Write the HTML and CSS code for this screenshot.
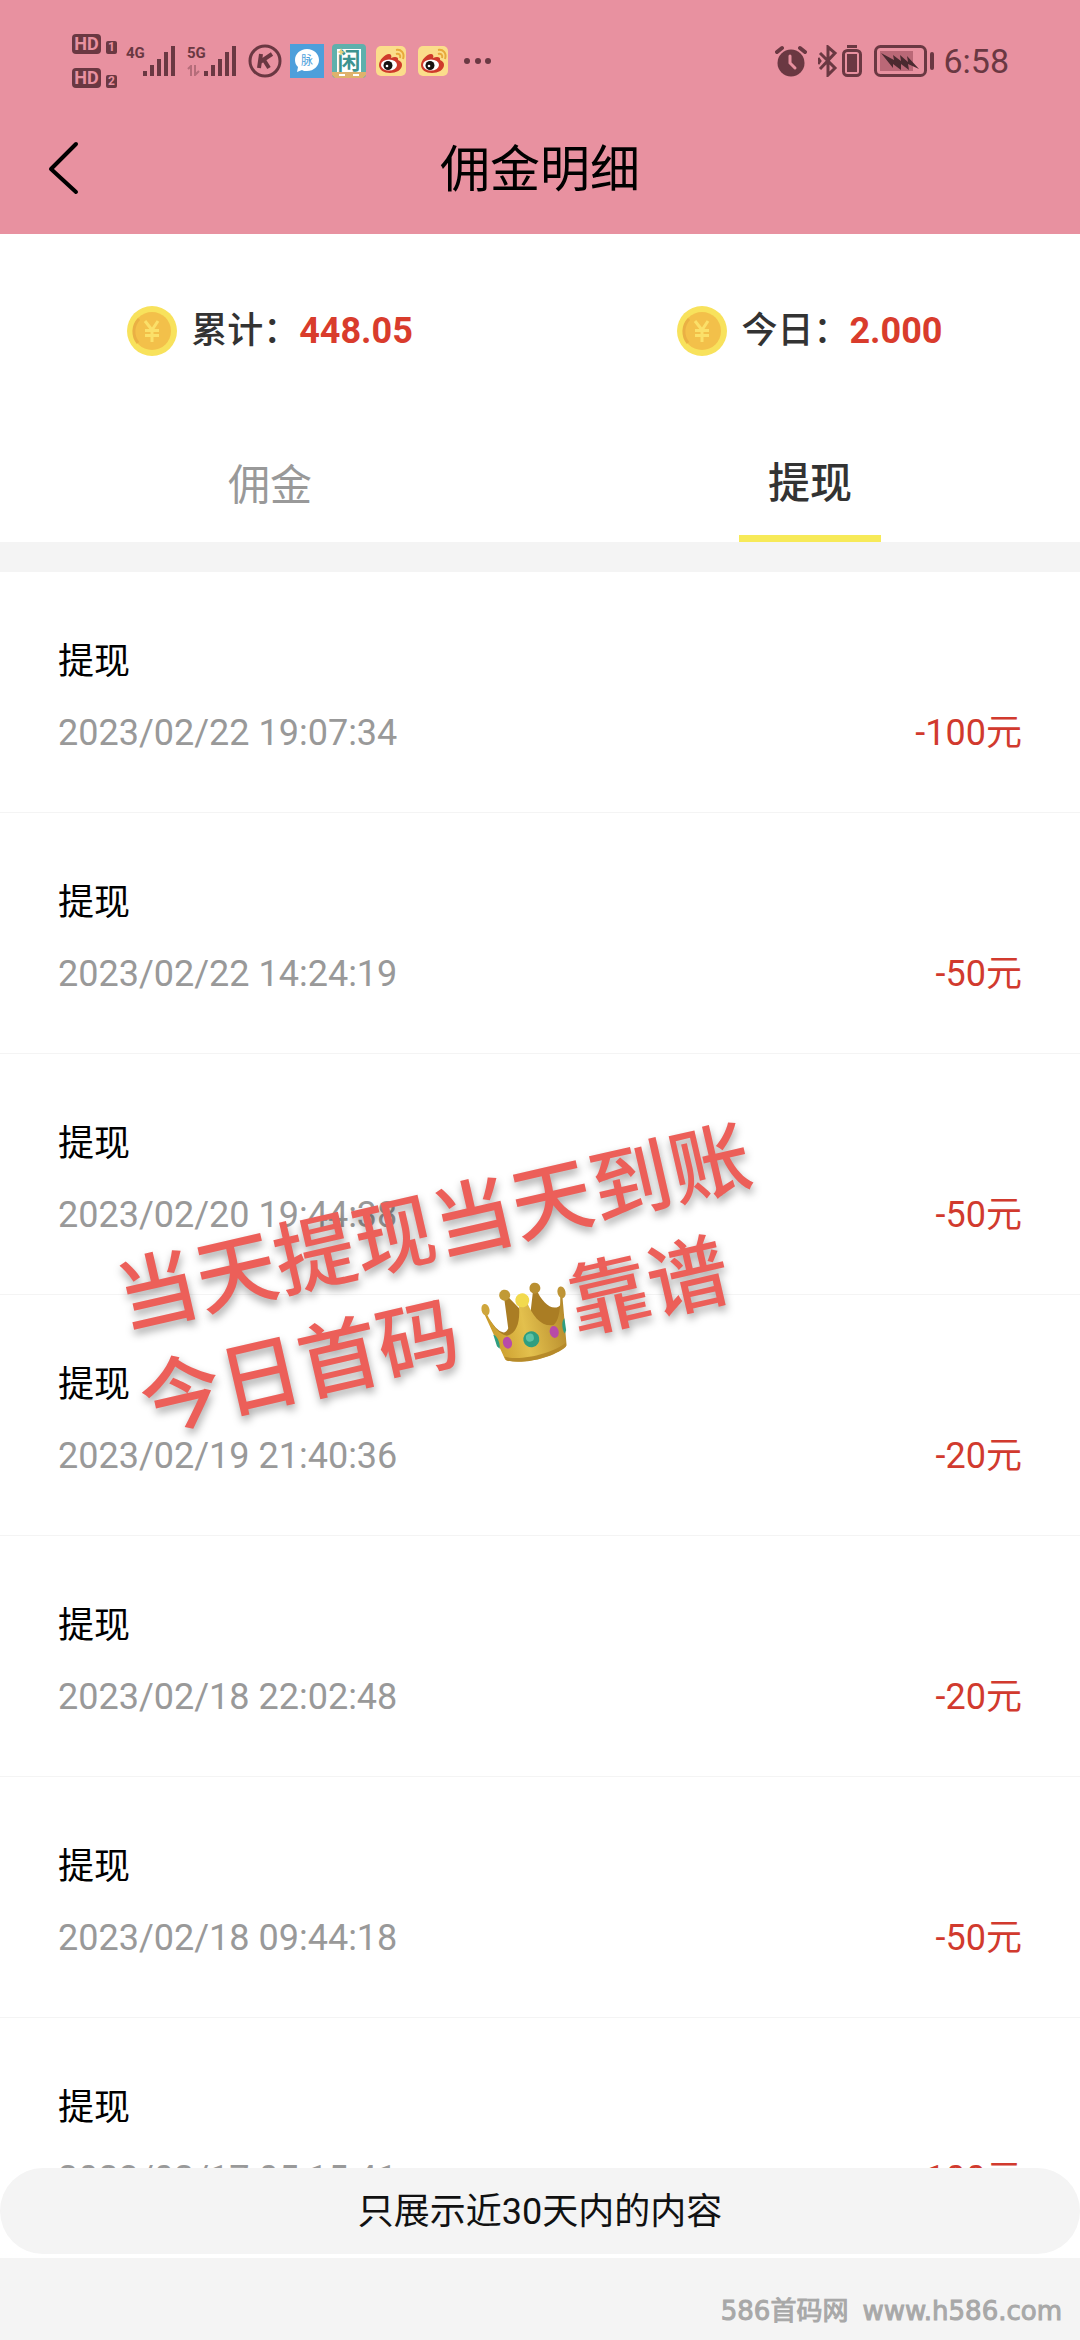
FILE: index.html
```html
<!DOCTYPE html>
<html lang="zh-CN">
<head>
<meta charset="utf-8">
<meta name="viewport" content="width=device-width, initial-scale=1">
<title>佣金明细</title>
<link rel="stylesheet" href="styles.css">
</head>
<body>
<svg class="defs" width="0" height="0" aria-hidden="true">
  <defs>
    <symbol id="bars" viewBox="0 0 34 32">
      <path d="M0 26h4v5H0zM7 20h4v11H7zM14 14h4v17h-4zM21 7h4v24h-4zM28 1h4v30h-4z"/>
    </symbol>
    <symbol id="weibo" viewBox="0 0 30 30">
      <rect width="30" height="30" rx="5" fill="#fbdd8b"/>
      <path d="M3 19c0-5 6-11 10-11 2 0 3 2 2 4 4-2 8-1 7 2 3 1 4 3 4 5 0 5-6 8-12 8S3 24 3 19z" fill="#cf3a2b"/>
      <ellipse cx="13" cy="19" rx="8" ry="5.500" fill="#fff"/>
      <circle cx="12" cy="19.500" r="4.500" fill="#17120f"/>
      <circle cx="11" cy="20" r="1.300" fill="#fff"/>
      <path d="M20 8c3-1 5 1 4 4M20 4c5-1 9 3 7 9" fill="none" stroke="#e8a93c" stroke-width="2"/>
    </symbol>
    <symbol id="coin" viewBox="0 0 50 50">
      <circle cx="25" cy="25" r="25" fill="#f8e25c"/>
      <circle cx="25" cy="25" r="19" fill="#f3c04a"/>
      <path d="M12 13a18 18 0 0 0-1 24" fill="none" stroke="#eab044" stroke-width="3"/>
      <path d="M18 15l7 9 6-9M25 24v12M18 24.500h14M18 29.500h14" fill="none" stroke="#fbe069" stroke-width="3"/>
    </symbol>
  </defs>
</svg>
<div class="app">
  <header class="top">
    <div class="status">
      <div class="status-left">
        <div class="hd">
          <div class="hd-line"><span class="hd-tag">HD</span><span class="sim">1</span></div>
          <div class="hd-line"><span class="hd-tag">HD</span><span class="sim">2</span></div>
        </div>
        <div class="signal"><span class="net">4G</span><svg class="bars"><use href="#bars"/></svg></div>
        <div class="signal"><span class="net">5G<svg class="updown" viewBox="0 0 14 11"><path d="M1 4l3-3v10M8 0v10l4-4" fill="none" stroke="currentColor" stroke-width="2"/></svg></span><svg class="bars"><use href="#bars"/></svg></div>
        <svg class="icon34 k" viewBox="0 0 34 34" fill="none" stroke="currentColor"><circle cx="17" cy="17" r="15" stroke-width="3"/><path d="M13 10l-2 14M24 10l-12 8M16 16l5 8" stroke-width="4"/></svg>
        <div class="apps">
          <svg class="icon34" viewBox="0 0 34 34"><rect width="34" height="34" fill="#4d9fdb"/><path d="M17 5c7 0 12 5 12 11s-5 11-12 11c-2 0-4 0-5-1l-5 2 1-5c-2-2-3-4-3-7 0-6 5-11 12-11z" fill="#fff"/><text x="17" y="21" font-size="12" text-anchor="middle" fill="#4d9fdb">脉</text></svg>
          <svg class="icon34" viewBox="0 0 34 34"><rect width="34" height="34" rx="4" fill="#5fb0ac"/><path d="M5 5h24v23H5z" fill="#fff"/><text x="17" y="25" font-size="23" font-weight="700" text-anchor="middle" fill="#3d9390">闲</text><path d="M0 28h34v3l-3 3H3l-3-3z" fill="#deb26c"/><path d="M7 31h6M21 31h6" stroke="#fff" stroke-width="2"/><path d="M9 4l1 3 3 1-3 1-1 3-1-3-3-1 3-1z" fill="#ecd17b"/></svg>
          <svg class="icon34 small"><use href="#weibo"/></svg>
          <svg class="icon34 small"><use href="#weibo"/></svg>
        </div>
        <svg class="dots" viewBox="0 0 28 6" fill="currentColor"><circle cx="3" cy="3" r="3"/><circle cx="14" cy="3" r="3"/><circle cx="24" cy="3" r="3"/></svg>
      </div>
      <div class="status-right">
        <svg class="alarm" viewBox="0 0 32 32"><circle cx="16" cy="18" r="13.500" fill="currentColor"/><path d="M2 7l5-4M25 3l5 4" stroke="currentColor" stroke-width="4" stroke-linecap="round"/><path d="M15 11v7l5 5" fill="none" stroke="#e891a0" stroke-width="3" stroke-linecap="round"/></svg>
        <svg class="bt" viewBox="0 0 20 32" fill="none" stroke="currentColor" stroke-width="3"><path d="M2 8l15 15-7 7V2l7 6L2 24M0 13l2 3-2 3"/></svg>
        <svg class="cell" viewBox="0 0 20 32" fill="none" stroke="currentColor"><rect x="1.500" y="5.500" width="17" height="25" rx="4" stroke-width="3"/><path d="M5 1.500h10" stroke-width="3"/><path d="M5 9h10v18H5z" fill="currentColor" stroke="none"/></svg>
        <svg class="battery" viewBox="0 0 60 32"><rect x="1.500" y="1.500" width="50" height="29" rx="5" fill="none" stroke="currentColor" stroke-width="3"/><path d="M6 6h33v20H6z" fill="#ba6877"/><path d="M7 8l13 7-1-5 8 6-1-6 8 7-1-6 12 13-11-5 1 6-8-6v6l-8-6v4z" fill="#4a2a30"/><path d="M58 9v14" stroke="currentColor" stroke-width="4" stroke-linecap="round"/></svg>
        <time class="clock">6:58</time>
      </div>
    </div>
    <div class="nav">
      <button class="back" type="button" aria-label="返回"><svg viewBox="0 0 32 54" fill="none" stroke="#000" stroke-width="4" stroke-linecap="round" stroke-linejoin="round"><path d="M29 3L4 28l25 23"/></svg></button>
      <h1 class="title">佣金明细</h1>
    </div>
  </header>

  <section class="stats">
    <div class="stat"><svg class="coin"><use href="#coin"/></svg><p class="stat-text">累计：<strong>448.05</strong></p></div>
    <div class="stat"><svg class="coin"><use href="#coin"/></svg><p class="stat-text">今日：<strong>2.000</strong></p></div>
  </section>

  <nav class="tabs">
    <button class="tab" type="button">佣金</button>
    <button class="tab active" type="button">提现</button>
  </nav>

  <main class="content">
    <ul class="list">
      <li class="row"><h2>提现</h2><p class="detail"><time>2023/02/22 19:07:34</time><span class="amount">-100元</span></p></li>
      <li class="row"><h2>提现</h2><p class="detail"><time>2023/02/22 14:24:19</time><span class="amount">-50元</span></p></li>
      <li class="row"><h2>提现</h2><p class="detail"><time>2023/02/20 19:44:38</time><span class="amount">-50元</span></p></li>
      <li class="row"><h2>提现</h2><p class="detail"><time>2023/02/19 21:40:36</time><span class="amount">-20元</span></p></li>
      <li class="row"><h2>提现</h2><p class="detail"><time>2023/02/18 22:02:48</time><span class="amount">-20元</span></p></li>
      <li class="row"><h2>提现</h2><p class="detail"><time>2023/02/18 09:44:18</time><span class="amount">-50元</span></p></li>
      <li class="row"><h2>提现</h2><p class="detail"><time>2023/02/17 05:15:41</time><span class="amount">-100元</span></p></li>
    </ul>
    <div class="sticker">
      <p>当天提现当天到账</p>
      <p>今日首码 <svg class="crown" viewBox="-4 0 95 90">
        <defs><linearGradient id="gold" x1="0" y1="0" x2="1" y2="0"><stop offset="0" stop-color="#c99a2a"/><stop offset=".45" stop-color="#e3c04d"/><stop offset="1" stop-color="#b58a2c"/></linearGradient></defs>
        <path d="M10 34c6 16 12 18 16 12L29 14h3l17 28 10-28h3c3 16 12 28 22 20l-6 40H16z" fill="#aa7d24"/>
        <circle cx="30" cy="13" r="5.500" fill="#c19a35"/><circle cx="61" cy="13" r="5.500" fill="#b98f31"/>
        <path d="M8 26c4 16 8 24 15 27 11 0 17-12 19-30h8c2 18 10 30 21 30 6-3 10-13 13-27l2 1-7 49c-15 9-48 9-63 0L6 27z" fill="url(#gold)"/>
        <path d="M16 73c15 8 48 8 63 0l-1 4c-15 8-46 8-61 0z" fill="#b68a2a"/>
        <ellipse cx="8" cy="23" rx="4" ry="6" fill="#cfa63c"/><ellipse cx="86" cy="23" rx="4" ry="6" fill="#bf9536"/>
        <circle cx="46" cy="22" r="7" fill="#f2da4e"/>
        <ellipse cx="46" cy="62" rx="8" ry="8" fill="#2f9e80"/><ellipse cx="45" cy="60" rx="4" ry="4" fill="#5cc3a6"/>
        <ellipse cx="22" cy="60" rx="4.500" ry="6" fill="#b84ba8"/><ellipse cx="70" cy="60" rx="4.500" ry="6" fill="#b84ba8"/>
        <path d="M10 49c4 2 5 11 3 15l-2-3zM83 49c-4 2-5 11-3 15l2-3z" fill="#2f9e80"/>
      </svg>靠谱</p>
    </div>
    <p class="notice">只展示近30天内的内容</p>
  </main>

  <footer class="foot"><span>586首码网</span><span>www.h586.com</span></footer>
</div>
</body>
</html>
```

FILE: styles.css
```css
* {
  box-sizing: border-box;
}

body,
h1,
h2,
p,
ul {
  margin: 0;
  padding: 0;
}

body {
  background: #fff;
  color: #111;
  font-family: Roboto, "Noto Sans CJK SC", sans-serif;
  font-size: 36px;
}

button {
  padding: 0;
  border: 0;
  background: none;
  font: inherit;
  color: inherit;
}

svg {
  display: block;
  flex: none;
}

.defs {
  position: absolute;
}

.app {
  display: flex;
  flex-direction: column;
  height: 100vh;
}

/* Header */
.top {
  background: #e891a0;
}

.status {
  display: flex;
  justify-content: space-between;
  align-items: center;
  height: 102px;
  padding: 20px 71px 0 72px;
  color: #6a3842;
}

.status-left,
.status-right,
.apps,
.hd-line {
  display: flex;
  align-items: center;
}

.hd {
  display: grid;
  gap: 14px;
  margin-right: 9px;
}

.hd-line {
  align-items: flex-end;
  gap: 5px;
  height: 20px;
}

.hd-tag,
.sim {
  border-radius: 4px;
  background: #6a3842;
  color: #e891a0;
  font-weight: 700;
  text-align: center;
}

.hd-tag {
  width: 29px;
  font-size: 18px;
  line-height: 20px;
}

.sim {
  width: 11px;
  border-radius: 2px;
  font-size: 12px;
  line-height: 13px;
}

.signal {
  display: flex;
  align-items: flex-start;
  margin-right: 10px;
}

.net {
  width: 17px;
  font-size: 15px;
  font-weight: 700;
  line-height: 16px;
}

.bars {
  width: 34px;
  height: 32px;
  fill: currentColor;
}

.updown {
  width: 14px;
  height: 11px;
  margin-top: 4px;
  opacity: .4;
}

.icon34 {
  width: 34px;
  height: 34px;
}

.k {
  margin-right: 8px;
}

.apps {
  gap: 8px;
  margin-right: 14px;
}

.small {
  padding: 2px;
}

.dots {
  width: 28px;
  height: 6px;
}

.alarm {
  width: 32px;
  height: 32px;
  margin-right: 11px;
}

.bt,
.cell {
  width: 20px;
  height: 32px;
}

.bt {
  margin-right: 4px;
}

.cell {
  margin-right: 12px;
}

.battery {
  width: 60px;
  height: 32px;
  margin-right: 9px;
}

.clock {
  font-size: 34px;
  line-height: 40px;
}

.nav {
  display: grid;
  grid-template-columns: 120px 1fr 120px;
  align-items: center;
  height: 132px;
}

.back {
  display: flex;
  align-items: center;
  height: 100%;
  padding-left: 47px;
}

.back svg {
  width: 32px;
  height: 54px;
}

.title {
  padding-top: 4px;
  color: #000;
  font-size: 50px;
  font-weight: 400;
  line-height: 72px;
  text-align: center;
}

/* Totals */
.stats {
  display: grid;
  grid-template-columns: 1fr 1fr;
  padding: 65px 0 63px;
}

.stat {
  display: flex;
  justify-content: center;
  align-items: center;
  gap: 14px;
  height: 64px;
}

.coin {
  width: 50px;
  height: 50px;
}

.stat-text {
  color: #333;
  font-weight: 500;
  line-height: 48px;
}

.stat-text strong {
  color: #d93c2c;
  font-weight: 700;
}

/* Tabs */
.tabs {
  display: grid;
  grid-template-columns: 1fr 1fr;
  justify-items: center;
  border-bottom: 30px solid #f4f4f4;
}

.tab {
  width: 142px;
  height: 116px;
  padding-top: 10px;
  border-bottom: 7px solid transparent;
  color: #999;
  font-size: 42px;
  line-height: 60px;
}

.tab.active {
  padding-top: 6px;
  border-color: #f7ea58;
  color: #333;
  font-weight: 500;
}

/* Records */
.content {
  position: relative;
  flex: 1;
  min-height: 0;
  overflow: hidden;
}

.list {
  height: 100%;
  overflow-y: auto;
  scrollbar-width: none;
  list-style: none;
}

.row {
  padding: 66px 58px 54px;
  border-bottom: 1px solid #f4f4f4;
}

.row h2 {
  color: #000;
  font-size: 36px;
  font-weight: 400;
  line-height: 48px;
}

.detail {
  display: flex;
  justify-content: space-between;
  margin-top: 22px;
  color: #999;
  line-height: 50px;
}

.amount {
  color: #d13a2e;
}

.sticker {
  position: absolute;
  top: 603px;
  left: 122px;
  width: 648px;
  color: #ec5f59;
  font-size: 81px;
  font-weight: 500;
  line-height: 106px;
  white-space: nowrap;
  text-shadow: 0 5px 8px rgba(0, 0, 0, .35);
  transform: rotate(-13deg);
}

.crown {
  display: inline-block;
  width: 95px;
  height: 90px;
  vertical-align: -24px;
}

.notice {
  position: absolute;
  right: 0;
  bottom: 4px;
  left: 0;
  padding-top: 2px;
  border-radius: 43px;
  background: #f4f4f4;
  line-height: 84px;
  text-align: center;
}

/* Footer */
.foot {
  display: flex;
  justify-content: flex-end;
  gap: 14px;
  padding: 37px 18px 13px;
  background: #f4f4f4;
  color: #a8a8a8;
  font-family: "DejaVu Sans", "Noto Sans CJK SC", sans-serif;
  font-size: 26px;
  line-height: 32px;
  -webkit-text-stroke: 1px #a8a8a8;
}
```
